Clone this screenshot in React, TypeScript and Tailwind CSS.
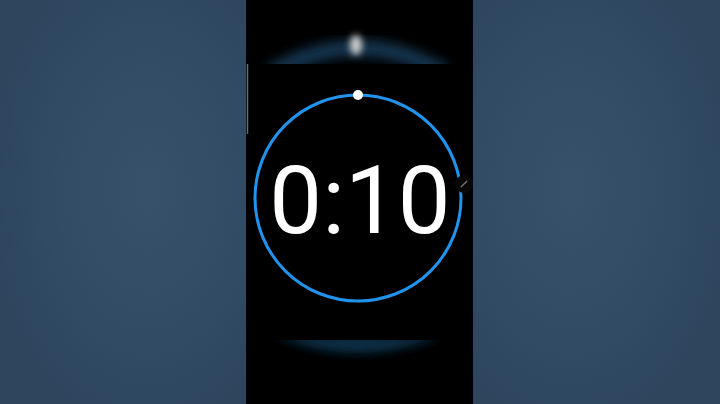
export default function App() {
  return (
    <div className="flex h-[404px] w-[720px] overflow-hidden bg-[#2f4a63]">
      <aside className="h-full w-[246px] bg-[radial-gradient(ellipse_65%_60%_at_60%_47%,#365169_0%,#324c65_55%,#2d465e_100%)]" />

      <main className="flex h-full w-[227px] flex-col bg-black">
        {/* top glow (cut by next view) */}
        <div className="h-[64px] w-full overflow-hidden">
          <svg width="227" height="64" viewBox="0 0 227 64">
            <defs>
              <filter id="blurTop" x="-50%" y="-50%" width="200%" height="200%">
                <feGaussianBlur stdDeviation="6" />
              </filter>
              <filter id="blurDot" x="-100%" y="-100%" width="300%" height="300%">
                <feGaussianBlur stdDeviation="3.5" />
              </filter>
            </defs>
            <path d="M24 74 Q112 22 200 74" stroke="#1a4566" strokeWidth="16" fill="none" filter="url(#blurTop)" opacity="0.8" />
            <ellipse cx="110" cy="45" rx="6" ry="10" fill="#d4d4d4" filter="url(#blurDot)" />
          </svg>
        </div>

        {/* dial */}
        <div className="grid h-[276px] w-full">
          <svg className="col-start-1 row-start-1" width="227" height="276" viewBox="0 0 227 276">
            <line x1="1.5" y1="0" x2="1.5" y2="70" stroke="#6b6b6b" strokeWidth="1.5" />
            <circle cx="112" cy="134" r="103" stroke="#2293ec" strokeWidth="3" fill="none" />
            <circle cx="112" cy="31" r="5" fill="#ffffff" />
            <circle cx="218" cy="120" r="9" fill="#080808" />
            <line x1="215" y1="123" x2="221" y2="117" stroke="#777777" strokeWidth="1.2" />
          </svg>
          <div className="col-start-1 row-start-1 flex items-center justify-center pb-[2px] pl-[1px] font-['Roboto',sans-serif] text-[94px] leading-none font-normal text-white">
            0:10
          </div>
        </div>

        {/* bottom glow */}
        <div className="h-[64px] w-full overflow-hidden">
          <svg width="227" height="64" viewBox="0 0 227 64">
            <defs>
              <filter id="blurBottom" x="-50%" y="-100%" width="200%" height="300%">
                <feGaussianBlur stdDeviation="5" />
              </filter>
            </defs>
            <path d="M30 -4 Q112 30 195 -4 Z" fill="#0f3550" filter="url(#blurBottom)" opacity="0.9" />
          </svg>
        </div>
      </main>

      <aside className="h-full flex-1 bg-[radial-gradient(ellipse_65%_60%_at_40%_47%,#365169_0%,#324c65_55%,#2d465e_100%)]" />
    </div>
  );
}
